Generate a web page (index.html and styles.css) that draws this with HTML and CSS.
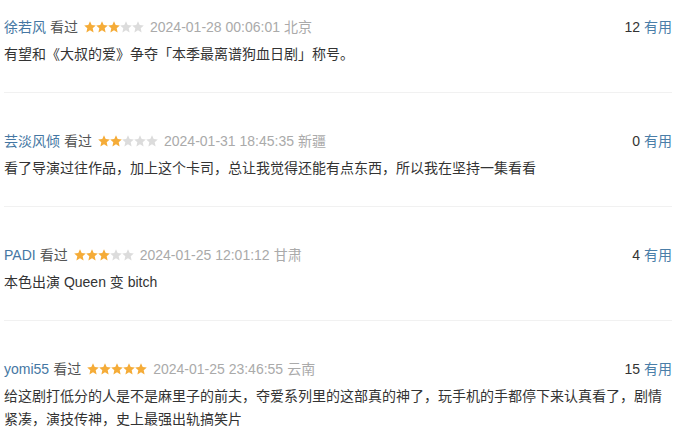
FILE: index.html
```html
<!DOCTYPE html>
<html lang="zh-CN">
<head>
    <meta charset="UTF-8">
    <meta name="viewport" content="width=device-width, initial-scale=1.0">
    <title>短评</title>
    <link rel="stylesheet" href="styles.css">
</head>
<body>
    <svg width="0" height="0" style="position:absolute">
        <defs>
            <path id="star" d="M6 0.3 L7.7 4.1 L11.8 4.5 L8.7 7.2 L9.6 11.4 L6 9.2 L2.4 11.4 L3.3 7.2 L0.2 4.5 L4.3 4.1 Z"/>
        </defs>
    </svg>
    <div class="comments">
        <div class="comment">
            <div class="comment-info">
                <div class="meta">
                    <a href="#" class="user">徐若风</a>
                    <span class="status">看过</span>
                    <span class="rating">
                        <svg class="on" viewBox="0 0 12 12"><use href="#star"/></svg><svg class="on" viewBox="0 0 12 12"><use href="#star"/></svg><svg class="on" viewBox="0 0 12 12"><use href="#star"/></svg><svg viewBox="0 0 12 12"><use href="#star"/></svg><svg viewBox="0 0 12 12"><use href="#star"/></svg>
                    </span>
                    <span class="time">2024-01-28 00:06:01</span>
                    <span class="location">北京</span>
                </div>
                <div class="votes"><span class="count">12</span> <a href="#">有用</a></div>
            </div>
            <p class="content">有望和《大叔的爱》争夺「本季最离谱狗血日剧」称号。</p>
        </div>
        <div class="comment">
            <div class="comment-info">
                <div class="meta">
                    <a href="#" class="user">芸淡风倾</a>
                    <span class="status">看过</span>
                    <span class="rating">
                        <svg class="on" viewBox="0 0 12 12"><use href="#star"/></svg><svg class="on" viewBox="0 0 12 12"><use href="#star"/></svg><svg viewBox="0 0 12 12"><use href="#star"/></svg><svg viewBox="0 0 12 12"><use href="#star"/></svg><svg viewBox="0 0 12 12"><use href="#star"/></svg>
                    </span>
                    <span class="time">2024-01-31 18:45:35</span>
                    <span class="location">新疆</span>
                </div>
                <div class="votes"><span class="count">0</span> <a href="#">有用</a></div>
            </div>
            <p class="content">看了导演过往作品，加上这个卡司，总让我觉得还能有点东西，所以我在坚持一集看看</p>
        </div>
        <div class="comment">
            <div class="comment-info">
                <div class="meta">
                    <a href="#" class="user">PADI</a>
                    <span class="status">看过</span>
                    <span class="rating">
                        <svg class="on" viewBox="0 0 12 12"><use href="#star"/></svg><svg class="on" viewBox="0 0 12 12"><use href="#star"/></svg><svg class="on" viewBox="0 0 12 12"><use href="#star"/></svg><svg viewBox="0 0 12 12"><use href="#star"/></svg><svg viewBox="0 0 12 12"><use href="#star"/></svg>
                    </span>
                    <span class="time">2024-01-25 12:01:12</span>
                    <span class="location">甘肃</span>
                </div>
                <div class="votes"><span class="count">4</span> <a href="#">有用</a></div>
            </div>
            <p class="content">本色出演 Queen 变 bitch</p>
        </div>
        <div class="comment">
            <div class="comment-info">
                <div class="meta">
                    <a href="#" class="user">yomi55</a>
                    <span class="status">看过</span>
                    <span class="rating">
                        <svg class="on" viewBox="0 0 12 12"><use href="#star"/></svg><svg class="on" viewBox="0 0 12 12"><use href="#star"/></svg><svg class="on" viewBox="0 0 12 12"><use href="#star"/></svg><svg class="on" viewBox="0 0 12 12"><use href="#star"/></svg><svg class="on" viewBox="0 0 12 12"><use href="#star"/></svg>
                    </span>
                    <span class="time">2024-01-25 23:46:55</span>
                    <span class="location">云南</span>
                </div>
                <div class="votes"><span class="count">15</span> <a href="#">有用</a></div>
            </div>
            <p class="content">给这剧打低分的人是不是麻里子的前夫，夺爱系列里的这部真的神了，玩手机的手都停下来认真看了，剧情紧凑，演技传神，史上最强出轨搞笑片</p>
        </div>
    </div>
</body>
</html>
```

FILE: styles.css
```css
body {
    font-family: "Liberation Sans", Arial, "Noto Sans CJK SC", sans-serif;
    font-size: 14px;
    margin: 0;
    padding: 16px 0 0 4px;
    background-color: #fff;
    color: #333;
}
a {
    text-decoration: none;
}
.comments {
    width: 668px;
}
.comment {
    padding-bottom: 26px;
    border-bottom: 1px solid #f1f1f1;
}
.comment + .comment {
    padding-top: 37px;
}
.comment:last-child {
    padding-bottom: 0;
    border-bottom: none;
}
.comment-info {
    display: flex;
    justify-content: space-between;
    align-items: center;
    line-height: 22px;
}
.meta {
    display: flex;
    align-items: center;
    gap: 4px;
}
.user {
    color: #4577a3;
}
.status {
    color: #555;
}
.rating {
    display: flex;
    margin: 0 2px;
}
.rating svg {
    width: 12px;
    height: 12px;
    fill: #dcdcdc;
}
.rating svg.on {
    fill: #f5ac38;
}
.time, .location {
    color: #aaa;
}
.votes .count {
    color: #333;
}
.votes a {
    color: #4a7ea8;
}
.content {
    margin: 5px 0 0;
    line-height: 23px;
}
```
